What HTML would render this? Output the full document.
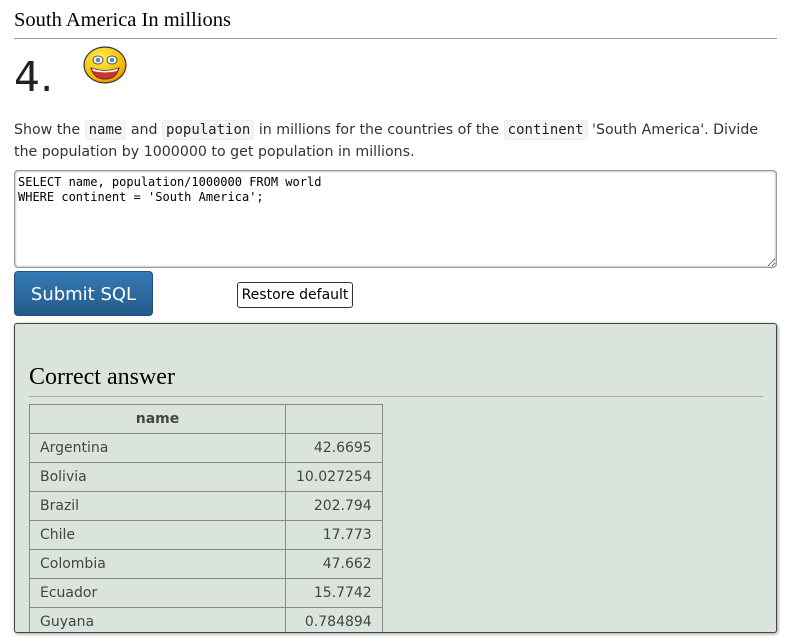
<!DOCTYPE html>
<html><head><style>
body{margin:0;width:785px;height:643px;overflow:hidden;background:#fff;font-family:"DejaVu Sans",sans-serif;color:#333;}
.abs{position:absolute}
h2{position:absolute;left:14px;top:9px;margin:0;font:20.5px "Liberation Serif",serif;color:#000;}
.hr{position:absolute;height:1px;background:#999}
code{font-family:"DejaVu Sans Mono",monospace;background:#f5f5f5;border:1px solid #eee;border-radius:3px;padding:1px 3px;color:#222;font-size:14px}
p{position:absolute;left:14px;top:119px;margin:0;width:765px;font-size:14.2px;line-height:22px;color:#333}
textarea{position:absolute;left:14px;top:170px;width:763px;height:98px;box-sizing:border-box;border:1px solid #999;border-radius:4px;box-shadow:inset 0 0 2px #888;font:12px "DejaVu Sans Mono",monospace;padding:4px 3px;resize:both;color:#000;line-height:15px}
.sub{left:14px;top:271px;width:139px;height:45px;box-sizing:border-box;border:1px solid #1e4f80;border-radius:4px;background:linear-gradient(#337ab7,#265a88);color:#fff;font-size:18px;text-align:center;line-height:45px}
.rst{left:237px;top:282px;width:116px;height:26px;box-sizing:border-box;border:1px solid #333;border-radius:3px;font-size:14px;text-align:center;line-height:25px;color:#000}
.box{left:14px;top:323px;width:763px;height:310px;box-sizing:border-box;border:1px solid #444;border-radius:3px;background:#dae4da;box-shadow:1px 1px 3px #999;overflow:hidden}
table{position:absolute;left:14px;top:80px;border-collapse:collapse;font-size:14px;color:#444}
td,th{border:1px solid #888;height:28px;padding:0 10px}
th{text-align:center}
td.n{text-align:right}
</style></head><body>
<h2>South America In millions</h2>
<div class="hr" style="left:14px;top:38px;width:763px"></div>
<div class="abs" style="left:14px;top:53px;font-size:41px;color:#222">4.</div>
<svg class="abs" style="left:82px;top:45px" width="46" height="40" viewBox="0 0 46 40">
<defs><radialGradient id="g" cx="0.4" cy="0.3" r="0.8"><stop offset="0" stop-color="#ffee55"/><stop offset="0.7" stop-color="#f6b800"/><stop offset="1" stop-color="#d98000"/></radialGradient></defs>
<ellipse cx="23" cy="20" rx="21" ry="18" fill="url(#g)" stroke="#333" stroke-width="1.2"/>
<ellipse cx="16" cy="15" rx="5" ry="4" fill="#fff" stroke="#555"/><ellipse cx="30" cy="15" rx="5" ry="4" fill="#fff" stroke="#555"/>
<circle cx="16" cy="15" r="2.3" fill="#4a90c0"/><circle cx="30" cy="15" r="2.3" fill="#4a90c0"/>
<path d="M9 23 Q23 28 37 23 Q34 34 23 34 Q12 34 9 23Z" fill="#c33" stroke="#622"/>
<path d="M10 23.5 Q23 28 36 23.5 L35 26 Q23 29 11 26Z" fill="#fff"/>
</svg>
<p>Show the <code>name</code> and <code>population</code> in millions for the countries of the <code>continent</code> 'South America'. Divide the population by 1000000 to get population in millions.</p>
<textarea>SELECT name, population/1000000 FROM world
WHERE continent = 'South America';</textarea>
<div class="abs sub">Submit SQL</div>
<div class="abs rst">Restore default</div>
<div class="abs box">
<div class="abs" style="left:14px;top:40px;font:24px 'Liberation Serif',serif;color:#000">Correct answer</div>
<div class="hr" style="left:14px;top:72px;width:734px;background:#aaa"></div>
<table>
<tr><th style="width:235px">name</th><th style="width:75px"></th></tr>
<tr><td>Argentina</td><td class="n">42.6695</td></tr>
<tr><td>Bolivia</td><td class="n">10.027254</td></tr>
<tr><td>Brazil</td><td class="n">202.794</td></tr>
<tr><td>Chile</td><td class="n">17.773</td></tr>
<tr><td>Colombia</td><td class="n">47.662</td></tr>
<tr><td>Ecuador</td><td class="n">15.7742</td></tr>
<tr><td>Guyana</td><td class="n">0.784894</td></tr>
</table>
</div>
</body></html>
